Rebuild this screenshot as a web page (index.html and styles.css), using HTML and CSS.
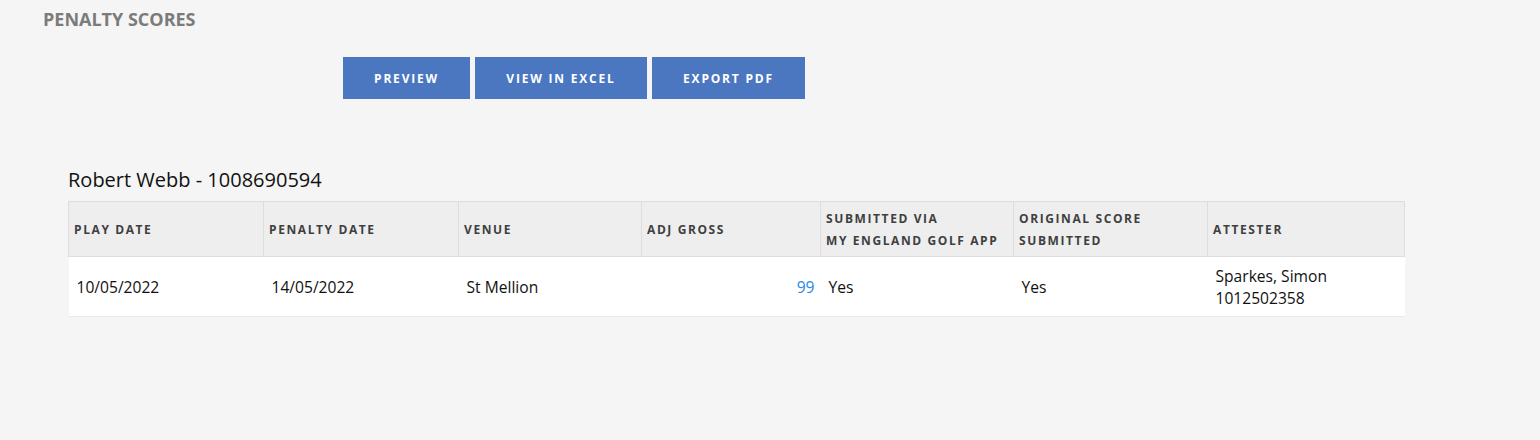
FILE: index.html
```html
<!DOCTYPE html>
<html>
<head>
<meta charset="utf-8">
<link rel="stylesheet" href="styles.css">
</head>
<body>
<div class="page">
  <h1 class="title">PENALTY SCORES</h1>
  <div class="actions">
    <button class="btn btn-preview">PREVIEW</button>
    <button class="btn btn-excel">VIEW IN EXCEL</button>
    <button class="btn btn-pdf">EXPORT PDF</button>
  </div>
  <section class="player">
    <h2 class="player-name">Robert Webb - 1008690594</h2>
    <table class="scores">
      <colgroup>
        <col class="c1"><col class="c2"><col class="c3"><col class="c4"><col class="c5"><col class="c6"><col class="c7">
      </colgroup>
      <thead>
        <tr>
          <th>PLAY DATE</th>
          <th>PENALTY DATE</th>
          <th>VENUE</th>
          <th>ADJ GROSS</th>
          <th>SUBMITTED VIA<br>MY ENGLAND GOLF APP</th>
          <th>ORIGINAL SCORE<br>SUBMITTED</th>
          <th>ATTESTER</th>
        </tr>
      </thead>
      <tbody>
        <tr>
          <td>10/05/2022</td>
          <td>14/05/2022</td>
          <td>St Mellion</td>
          <td class="num">99</td>
          <td>Yes</td>
          <td>Yes</td>
          <td>Sparkes, Simon<br>1012502358</td>
        </tr>
      </tbody>
    </table>
  </section>
</div>
</body>
</html>
```

FILE: styles.css
```css
html, body {
  margin: 0;
  padding: 0;
  background: #f5f5f5;
  font-family: "Open Sans", "Liberation Sans", sans-serif;
}
.page {
  padding: 8px 0 0 43px;
}
.title {
  margin: 0;
  font-size: 18px;
  font-weight: 700;
  color: #7b7b7b;
  letter-spacing: 0;
  line-height: 22px;
}
.actions {
  display: flex;
  gap: 5px;
  margin: 27px 0 0 300px;
}
.btn {
  height: 42px;
  border: none;
  background: #4b77c1;
  color: #fff;
  font-family: "Open Sans", "Liberation Sans", sans-serif;
  font-size: 12px;
  font-weight: 700;
  letter-spacing: 1.8px;
  padding: 0;
}
.btn-preview { width: 127px; }
.btn-excel { width: 172px; }
.btn-pdf { width: 153px; }
.player {
  margin: 67px 0 0 25px;
  width: 1336px;
}
.player-name {
  margin: 0 0 7px 0;
  font-size: 20px;
  font-weight: 400;
  color: #111;
  line-height: 28px;
}
.scores {
  width: 1336px;
  border-collapse: collapse;
  table-layout: fixed;
}
.c1 { width: 195px; }
.c2 { width: 195px; }
.c3 { width: 183px; }
.c4 { width: 179px; }
.c5 { width: 193px; }
.c6 { width: 194px; }
.c7 { width: 197px; }
.scores th {
  background: #eeeeee;
  border: 1px solid #dddddd;
  height: 53px;
  padding: 1px 5px 0;
  text-align: left;
  vertical-align: middle;
  font-size: 12px;
  font-weight: 700;
  letter-spacing: 1.6px;
  color: #3f3f3f;
  line-height: 22px;
}
.scores td {
  background: #fff;
  border-bottom: 1px solid #eaeaea;
  height: 59px;
  padding: 0 8px;
  vertical-align: middle;
  font-size: 15.6px;
  color: #111;
  line-height: 22px;
}
.scores td.num {
  text-align: right;
  color: #2a88e6;
  padding-right: 6px;
}
```
